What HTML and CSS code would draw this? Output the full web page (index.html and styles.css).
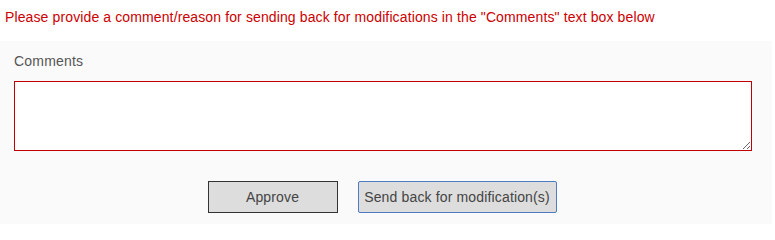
FILE: index.html
```html
<!DOCTYPE html>
<html>
<head>
<meta charset="utf-8">
<link rel="stylesheet" href="styles.css">
</head>
<body>
<div class="notice">Please provide a comment/reason for sending back for modifications in the "Comments" text box below</div>
<div class="panel">
  <label class="label" for="comments">Comments</label>
  <textarea id="comments" class="comments"></textarea>
  <div class="actions">
    <button class="btn btn-approve">Approve</button>
    <button class="btn btn-send">Send back for modification(s)</button>
  </div>
</div>
</body>
</html>
```
FILE: styles.css
```css
html, body {
  margin: 0;
  padding: 0;
  background: #ffffff;
  font-family: "Liberation Sans", Arial, sans-serif;
  overflow: hidden;
}
.notice {
  color: #cc0000;
  font-size: 14px;
  line-height: 16px;
  letter-spacing: 0.12px;
  padding: 9px 5px 0 5px;
  height: 32px;
  white-space: nowrap;
}
.panel {
  background: #fafafa;
  width: 772px;
  height: 183px;
  box-sizing: border-box;
  padding: 12px 20px 0 14px;
  display: flex;
  flex-direction: column;
}
.label {
  color: #555555;
  font-size: 14px;
  line-height: 16px;
  letter-spacing: 0.2px;
  margin-bottom: 12px;
}
.comments {
  display: block;
  box-sizing: border-box;
  width: 738px;
  height: 70px;
  border: 1px solid #c00000;
  background: #ffffff;
  margin: 0;
  padding: 2px;
  font-family: inherit;
  font-size: 14px;
  resize: vertical;
}
.actions {
  display: flex;
  justify-content: center;
  gap: 20px;
  margin-top: 30px;
  padding-right: 2px;
}
.btn {
  box-sizing: border-box;
  height: 32px;
  margin: 0;
  background: #dddddd;
  color: #444444;
  font-family: "Liberation Sans", Arial, sans-serif;
  font-size: 14px;
  letter-spacing: 0.15px;
  padding: 0 4px;
}
.btn-approve {
  width: 130px;
  border: 1px solid #333333;
  border-radius: 0;
}
.btn-send {
  width: 199px;
  border: 1px solid #4d7cc2;
  border-radius: 2px;
}
```
